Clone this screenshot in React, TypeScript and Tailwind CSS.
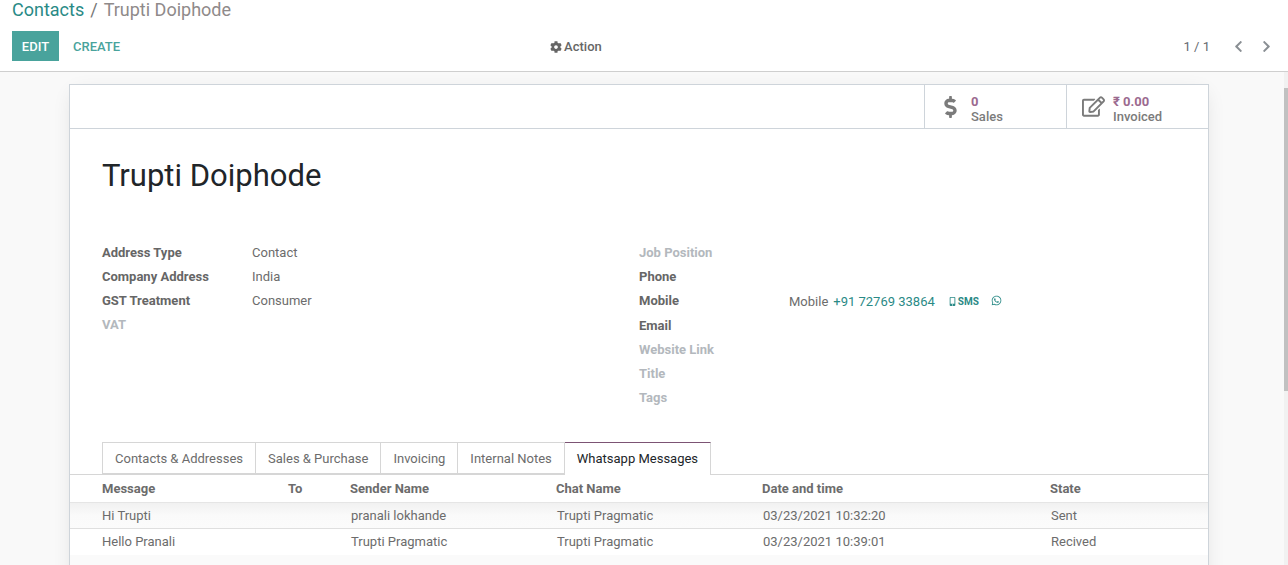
import { FaCog, FaChevronLeft, FaChevronRight, FaDollarSign, FaWhatsapp, FaMobileAlt, FaRegEdit } from 'react-icons/fa';

const leftFields = [
  { label: 'Address Type', value: 'Contact' },
  { label: 'Company Address', value: 'India' },
  { label: 'GST Treatment', value: 'Consumer' },
  { label: 'VAT', value: '', muted: true },
];

const rightFields = [
  { label: 'Job Position', muted: true },
  { label: 'Phone' },
  { label: 'Mobile', mobile: true },
  { label: 'Email' },
  { label: 'Website Link', muted: true },
  { label: 'Title', muted: true },
  { label: 'Tags', muted: true },
];

const tabs = ['Contacts & Addresses', 'Sales & Purchase', 'Invoicing', 'Internal Notes'];

const rows = [
  { message: 'Hi Trupti', sender: 'pranali lokhande', chat: 'Trupti Pragmatic', date: '03/23/2021 10:32:20', state: 'Sent' },
  { message: 'Hello Pranali', sender: 'Trupti Pragmatic', chat: 'Trupti Pragmatic', date: '03/23/2021 10:39:01', state: 'Recived' },
];

const gridCols = 'grid grid-cols-[186px_62px_206px_206px_288px_1fr] pl-8';

export default function App() {
  return (
    <div className="flex h-[565px] flex-col overflow-hidden bg-[#f9f9f9] font-['Roboto',sans-serif] text-[13px] text-[#6c6c6c]">
      <header className="h-[72px] shrink-0 border-b border-[#cfcfcf] bg-white px-3">
        <div className="flex h-5 items-center text-[18px] leading-5">
          <span className="text-[#2a8a86]">Contacts</span>
          <span className="ml-[6px] text-[#777777]">/</span>
          <span className="ml-[6px] text-[#8f8a8a]">Trupti Doiphode</span>
        </div>
        <div className="mt-[11px] flex h-[30px] items-center">
          <button className="h-[30px] w-[47px] bg-[#49a39c] pt-px text-[13px] font-medium text-white">EDIT</button>
          <button className="ml-[14px] pt-px text-[13px] font-medium text-[#49a39c]">CREATE</button>
          <div className="ml-[430px] flex items-center gap-[2px] pt-px text-[13px] font-medium text-[#666666]">
            <FaCog className="h-3 w-3" />
            <span>Action</span>
          </div>
          <div className="ml-auto flex items-center pt-px text-[#8a8f94]">
            <span className="text-[13px] text-[#666a70]">1 / 1</span>
            <FaChevronLeft className="ml-[22px] h-[13px] w-[13px]" />
            <FaChevronRight className="ml-[15px] mr-[3px] h-[13px] w-[13px]" />
          </div>
        </div>
      </header>

      <div className="flex min-h-0 flex-1">
        <main className="min-w-0 flex-1 pl-[69px] pr-[75px] pt-3">
          <div className="h-[600px] w-[1140px] border border-[#ced4da] bg-white shadow-[0_5px_20px_-5px_rgba(0,0,0,0.12)]">
            <div className="flex h-[44px] justify-end border-b border-[#ced4da]">
              <div className="flex w-[142px] items-center border-l border-[#ced4da] pl-[19px]">
                <FaDollarSign className="h-[22px] w-[13px] text-[#7b7b7b]" />
                <div className="ml-[14px] pt-[4px] text-[13px] leading-[15px]">
                  <div className="font-bold text-[#9b6a8f]">0</div>
                  <div className="font-medium text-[#7b7b7b]">Sales</div>
                </div>
              </div>
              <div className="flex w-[142px] items-center border-l border-[#ced4da] pl-[15px]">
                <FaRegEdit className="h-[21px] w-[23px] text-[#7b7b7b]" />
                <div className="ml-[8px] pt-[4px] text-[13px] leading-[15px]">
                  <div className="font-bold text-[#9b6a8f]">₹ 0.00</div>
                  <div className="font-medium text-[#7b7b7b]">Invoiced</div>
                </div>
              </div>
            </div>

            <h1 className="mt-[28px] pl-8 text-[31px] font-normal leading-[38px] text-[#212529]">Trupti Doiphode</h1>

            <div className="mt-[46px] grid h-[189px] grid-cols-[537px_1fr] pl-8">
              <div>
                {leftFields.map((f) => (
                  <div key={f.label} className="flex h-6 items-center">
                    <span className={`w-[150px] font-bold ${f.muted ? 'text-[#b3b8bd]' : 'text-[#666666]'}`}>{f.label}</span>
                    <span>{f.value}</span>
                  </div>
                ))}
              </div>
              <div>
                {rightFields.map((f) => (
                  <div key={f.label} className={`flex items-center ${f.mobile ? 'h-[25px]' : 'h-6'}`}>
                    <span className={`w-[150px] font-bold ${f.muted ? 'text-[#b3b8bd]' : 'text-[#666666]'} ${f.mobile ? 'mb-[2px]' : ''}`}>{f.label}</span>
                    {f.mobile && (
                      <div className="flex items-center">
                        <span>Mobile</span>
                        <span className="ml-[5px] text-[#2a8a86]">+91 72769 33864</span>
                        <FaMobileAlt className="ml-[14px] h-[9px] w-[7px] text-[#2a8a86]" />
                        <span className="ml-[2px] text-[10px] font-bold text-[#2a8a86]">SMS</span>
                        <FaWhatsapp className="mb-[2px] ml-3 h-[11px] w-[11px] text-[#2a8a86]" />
                      </div>
                    )}
                  </div>
                ))}
              </div>
            </div>

            <div className="mt-[12px] flex h-[33px] border-b border-[#d6d6d6] pl-8">
              {tabs.map((t) => (
                <div key={t} className="flex h-[32px] items-center border border-l-0 border-[#d6d6d6] px-3 pt-[2px] first:border-l">
                  {t}
                </div>
              ))}
              <div className="flex h-[33px] items-center border-r border-t border-r-[#d6d6d6] border-t-[#7c5474] bg-white px-3 text-[#212529]">
                Whatsapp Messages
              </div>
            </div>

            <div className={`${gridCols} h-[28px] items-center border-b border-[#e5e5e5] font-bold`}>
              <span>Message</span>
              <span>To</span>
              <span>Sender Name</span>
              <span>Chat Name</span>
              <span>Date and time</span>
              <span>State</span>
            </div>
            {rows.map((r, i) => (
              <div
                key={r.message}
                className={`${gridCols} h-[26px] items-center ${i === 0 ? 'border-b border-[#dfdfdf] bg-gradient-to-b from-[#f1f1f1] via-[#fafafa] to-[#fbfbfb]' : 'bg-white'}`}
              >
                <span>{r.message}</span>
                <span />
                <span className="pl-px">{r.sender}</span>
                <span className="pl-px">{r.chat}</span>
                <span className="pl-px">{r.date}</span>
                <span className="pl-px">{r.state}</span>
              </div>
            ))}
            <div className="h-[30px] bg-[#fafafa]" />
          </div>
        </main>
        <div className="flex w-[4px] shrink-0 flex-col bg-[#f1f1f1]">
          <div className="mt-[16px] h-[303px] bg-[#c1c1c1]" />
        </div>
      </div>
    </div>
  );
}
